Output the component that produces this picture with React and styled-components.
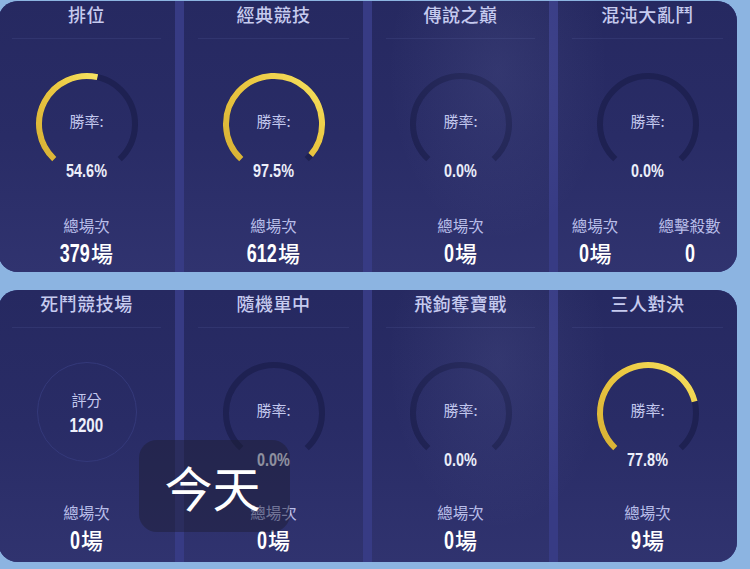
import React from "react";
import styled, { createGlobalStyle } from "styled-components";

const Global = createGlobalStyle`
  html, body { margin: 0; padding: 0; }
  body {
    background: #8cb4e1;
    width: 750px;
    height: 569px;
    overflow: hidden;
    font-family: "Noto Sans CJK TC", "Noto Sans", sans-serif;
  }
`;

const Page = styled.div`
  position: relative;
  width: 750px;
  height: 569px;
  padding-top: 1px;
  box-sizing: border-box;
  display: flex;
  flex-direction: column;
  gap: 18px;
`;

const Panel = styled.div`
  position: relative;
  margin-left: -2px;
  width: 739px;
  height: ${(p) => p.h}px;
  border-radius: 20px;
  overflow: hidden;
  background: #373b84;
  display: grid;
  grid-template-columns: 177px 179px 177px 1fr;
  column-gap: 9px;

  &::after {
    content: "";
    position: absolute;
    inset: 0;
    pointer-events: none;
    background: radial-gradient(ellipse 110px 170px at 500px 70px, rgba(170, 180, 230, 0.09), rgba(170, 180, 230, 0) 100%);
  }
`;

const Column = styled.div`
  position: relative;
  display: flex;
  flex-direction: column;
  align-items: center;
  background: linear-gradient(180deg, #262961 0%, #292c66 50%, #30336f 100%);
`;

const Header = styled.div`
  align-self: stretch;
  margin: 0 14px;
  height: 37px;
  border-bottom: 1px solid #31356f;
  display: flex;
  justify-content: center;
  align-items: flex-start;
`;

const Title = styled.div`
  font-size: 18px;
  line-height: 27px;
  font-weight: 500;
  color: #c6cbef;
  letter-spacing: 0.5px;
`;

const GaugeWrap = styled.div`
  position: relative;
  width: 106px;
  height: 106px;
  margin-top: 32px;
`;

const Svg = styled.svg`
  display: block;
`;

const CenterLabel = styled.div`
  position: absolute;
  left: 0;
  right: 0;
  top: 39px;
  text-align: center;
  font-size: 15px;
  line-height: 22px;
  color: #c3c8ee;
`;

const NUM_W = { ".": 0.278, "%": 0.889 };
const emWidth = (s) => [...String(s)].reduce((w, ch) => w + (NUM_W[ch] || 0.556), 0);

// condensed digits: Liberation Sans Bold squeezed horizontally
const Digits = styled.span`
  display: inline-block;
  font-family: "Liberation Sans", Arial, sans-serif;
  font-weight: 700;
  transform: scaleX(${(p) => p.$s});
  margin: 0 ${(p) => (-(1 - p.$s) * p.$em) / 2}em;
`;

const Percent = styled.div`
  position: absolute;
  left: 0;
  right: 0;
  top: 87px;
  text-align: center;
  font-size: 18px;
  line-height: 22px;
  color: #eceefa;
`;

const RatingValue = styled.div`
  font-size: 21px;
  line-height: 25px;
  color: #eef0fb;
`;

const Ring = styled.div`
  width: 100px;
  height: 100px;
  margin-top: 34px;
  margin-bottom: 2px;
  border-radius: 50%;
  border: 1px solid #34397a;
  display: flex;
  flex-direction: column;
  align-items: center;
  justify-content: center;
  padding-top: 2px;
  box-sizing: border-box;
`;

const RingLabel = styled.div`
  font-size: 15px;
  line-height: 22px;
  color: #c3c8ee;
`;

const Stats = styled.div`
  align-self: stretch;
  margin-top: ${(p) => p.mt}px;
  display: grid;
  grid-template-columns: ${(p) => (p.cols > 1 ? "74px 1fr" : "1fr")};
  margin-right: ${(p) => (p.cols > 1 ? "-10px" : "0")};
`;

const Stat = styled.div`
  display: flex;
  flex-direction: column;
  align-items: center;
`;

const StatLabel = styled.div`
  font-size: 15.5px;
  line-height: 22px;
  color: #b9bee9;
`;

const StatValue = styled.div`
  font-size: 25px;
  line-height: 30px;
  color: #ffffff;
  white-space: nowrap;
`;

const Unit = styled.span`
  font-family: "Noto Sans CJK TC", sans-serif;
  font-weight: 500;
  font-size: 22px;
  margin-left: 1px;
`;

const Toast = styled.div`
  position: absolute;
  left: 139px;
  top: 440px;
  width: 151px;
  height: 92px;
  border-radius: 18px;
  background: rgba(28, 28, 48, 0.45);
  display: flex;
  align-items: center;
  justify-content: center;
  padding-right: 4px;
  box-sizing: border-box;
  color: #ffffff;
  font-size: 48px;
  line-height: 1;
  font-weight: 400;
`;

function Num({ v, s }) {
  const str = String(v);
  return (
    <Digits $s={s} $em={emWidth(str)}>
      {str}
    </Digits>
  );
}

function pt(c, r, deg) {
  const a = (deg * Math.PI) / 180;
  return [c + r * Math.sin(a), c - r * Math.cos(a)];
}

function arc(c, r, from, to) {
  const [x1, y1] = pt(c, r, from);
  const [x2, y2] = pt(c, r, to);
  const large = to - from > 180 ? 1 : 0;
  return `M ${x1.toFixed(2)} ${y1.toFixed(2)} A ${r} ${r} 0 ${large} 1 ${x2.toFixed(2)} ${y2.toFixed(2)}`;
}

function Gauge({ value, id }) {
  const c = 53;
  const r = 48;
  const start = -137;
  const span = 274;
  const end = start + (span * value) / 100;
  return (
    <GaugeWrap>
      <Svg width="106" height="106" viewBox="0 0 106 106">
        <defs>
          <linearGradient id={id} x1="0" y1="1" x2="1" y2="0">
            <stop offset="0" stopColor="#d7b135" />
            <stop offset="0.6" stopColor="#ecc943" />
            <stop offset="1" stopColor="#f6e362" />
          </linearGradient>
        </defs>
        <path d={arc(c, r, start, start + span)} fill="none" stroke="#1e2152" strokeWidth="6" />
        {value > 0 && (
          <path d={arc(c, r, start, end)} fill="none" stroke={`url(#${id})`} strokeWidth="6" />
        )}
      </Svg>
      <CenterLabel>勝率:</CenterLabel>
      <Percent>
        <Num v={`${value.toFixed(1)}%`} s={0.8} />
      </Percent>
    </GaugeWrap>
  );
}

const Count = ({ n, unit = true }) => (
  <StatValue>
    <Num v={n} s={0.72} />
    {unit && <Unit>場</Unit>}
  </StatValue>
);

const top = [
  { title: "排位", rate: 54.6, games: 379 },
  { title: "經典競技", rate: 97.5, games: 612 },
  { title: "傳說之巔", rate: 0, games: 0 },
  { title: "混沌大亂鬥", rate: 0, games: 0, kills: 0 },
];

const bottom = [
  { title: "死鬥競技場", rating: 1200, games: 0 },
  { title: "隨機單中", rate: 0, games: 0 },
  { title: "飛鉤奪寶戰", rate: 0, games: 0 },
  { title: "三人對決", rate: 77.8, games: 9 },
];

function ModeColumn({ mode, idx, shift = 0 }) {
  const hasKills = mode.kills !== undefined;
  const rated = mode.rating !== undefined;
  return (
    <Column>
      <Header>
        <Title>{mode.title}</Title>
      </Header>
      {rated ? (
        <Ring>
          <RingLabel>評分</RingLabel>
          <RatingValue>
            <Num v={mode.rating} s={0.72} />
          </RatingValue>
        </Ring>
      ) : (
        <Gauge value={mode.rate} id={`g${idx}`} />
      )}
      <Stats cols={hasKills ? 2 : 1} mt={(rated ? 39 : 37) + shift}>
        <Stat>
          <StatLabel>總場次</StatLabel>
          <Count n={mode.games} />
        </Stat>
        {hasKills && (
          <Stat>
            <StatLabel>總擊殺數</StatLabel>
            <Count n={mode.kills} unit={false} />
          </Stat>
        )}
      </Stats>
    </Column>
  );
}

export default function App() {
  return (
    <>
      <Global />
      <Page>
        <Panel h={271}>
          {top.map((m, i) => (
            <ModeColumn key={m.title} mode={m} idx={`t${i}`} />
          ))}
        </Panel>
        <Panel h={272}>
          {bottom.map((m, i) => (
            <ModeColumn key={m.title} mode={m} idx={`b${i}`} shift={-2} />
          ))}
        </Panel>
        <Toast>今天</Toast>
      </Page>
    </>
  );
}
